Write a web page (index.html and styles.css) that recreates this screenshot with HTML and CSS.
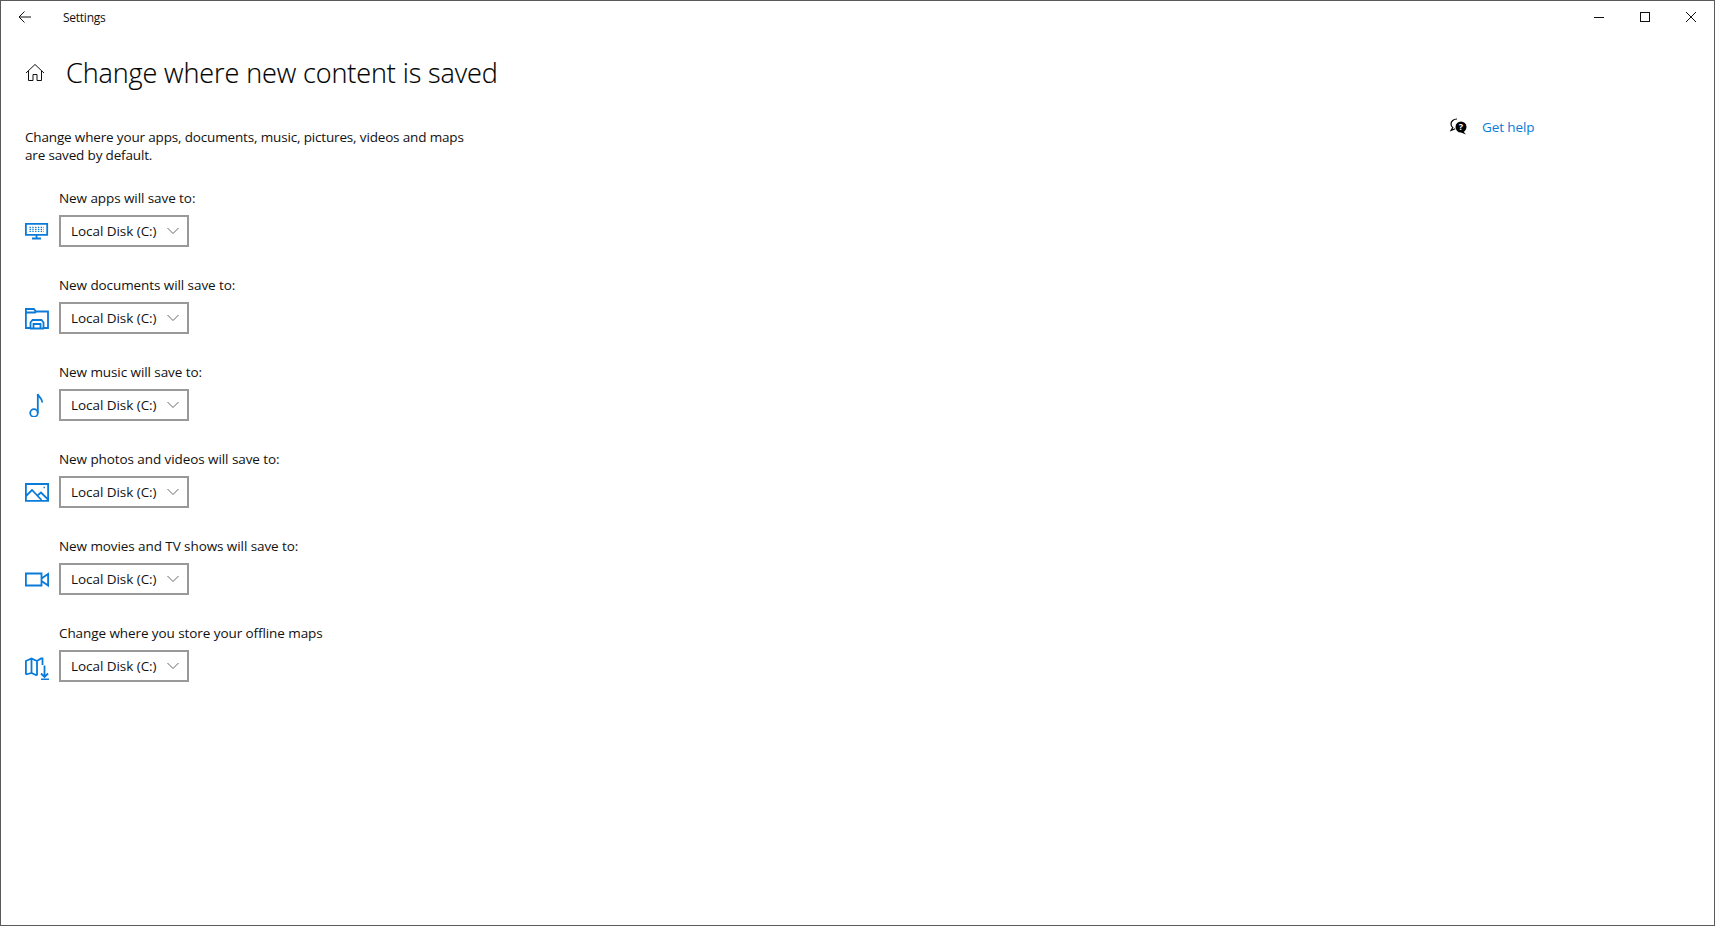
FILE: index.html
```html
<!DOCTYPE html>
<html lang="en">
<head>
<meta charset="utf-8">
<title>Settings</title>
<link rel="stylesheet" href="styles.css">
</head>
<body>
<div class="window">
  <header class="titlebar">
    <button class="back" aria-label="Back">
      <svg width="16" height="16" viewBox="0 0 16 16"><path d="M14 8H2.500M7.500 2.500 2 8l5.500 5.500" class="line"/></svg>
    </button>
    <span class="app-name">Settings</span>
    <div class="controls">
      <span class="ctl"><svg width="12" height="12" viewBox="0 0 12 12"><path d="M1 6.500h10" class="line"/></svg></span>
      <span class="ctl"><svg width="12" height="12" viewBox="0 0 12 12"><rect x="1.500" y="1.500" width="9" height="9" class="line"/></svg></span>
      <span class="ctl"><svg width="12" height="12" viewBox="0 0 12 12"><path d="M1 1l10 10M11 1 1 11" class="line"/></svg></span>
    </div>
  </header>
  <div class="content">
    <main class="main">
      <div class="heading">
        <svg class="home" width="20" height="20" viewBox="0 0 20 20"><path d="M1 10 10 1.500l9 8.500M3.500 8v9.500H8v-6h4v6h4.500V8" class="line"/></svg>
        <h1>Change where new content is saved</h1>
      </div>
      <p class="desc">Change where your apps, documents, music, pictures, videos and maps are saved by default.</p>

      <section class="row">
        <label>New apps will save to:</label>
        <svg class="icon" width="24" height="24" viewBox="0 0 24 24"><path d="M.9 4.800h21.300v11H.9zM11.500 16v3M7 19.500h9"/><path class="dots" d="M4.500 8.300h14.500M4.500 10.300h14.500M4.500 12.300h14.500"/></svg>
        <div class="combo"><span>Local Disk (C:)</span><svg width="12" height="8" viewBox="0 0 12 8"><path d="M.5 1 6 6.500 11.500 1" class="chev"/></svg></div>
      </section>

      <section class="row">
        <label>New documents will save to:</label>
        <svg class="icon" width="24" height="24" viewBox="0 0 24 24"><path d="M6 22H.9V3h8l2 2.500H23V22h-5M1 6.500h9l1.500-1"/><path d="M5.500 22.500v-6l2-2.500h9l2 2.500v6M8.500 22.500V18h7v4.500M5 22.500h14"/></svg>
        <div class="combo"><span>Local Disk (C:)</span><svg width="12" height="8" viewBox="0 0 12 8"><path d="M.5 1 6 6.500 11.500 1" class="chev"/></svg></div>
      </section>

      <section class="row">
        <label>New music will save to:</label>
        <svg class="icon" width="24" height="24" viewBox="0 0 24 24"><circle cx="9" cy="20" r="3.800"/><path d="M12.800 20V1c.5 3 4.500 4 4.500 8.500"/></svg>
        <div class="combo"><span>Local Disk (C:)</span><svg width="12" height="8" viewBox="0 0 12 8"><path d="M.5 1 6 6.500 11.500 1" class="chev"/></svg></div>
      </section>

      <section class="row">
        <label>New photos and videos will save to:</label>
        <svg class="icon" width="24" height="24" viewBox="0 0 24 24"><path d="M.9 4h22.200v16.800H.9zM1 16l6-6 9.500 10M12.500 15.500l3.500-3 7 7"/><path class="dots" d="M18.500 7.500h1.500"/></svg>
        <div class="combo"><span>Local Disk (C:)</span><svg width="12" height="8" viewBox="0 0 12 8"><path d="M.5 1 6 6.500 11.500 1" class="chev"/></svg></div>
      </section>

      <section class="row">
        <label>New movies and TV shows will save to:</label>
        <svg class="icon" width="24" height="24" viewBox="0 0 24 24"><path d="M.9 6.500h15.600v12H.9zM16.500 11.500l6.600-4.500v11.500L16.500 14"/></svg>
        <div class="combo"><span>Local Disk (C:)</span><svg width="12" height="8" viewBox="0 0 12 8"><path d="M.5 1 6 6.500 11.500 1" class="chev"/></svg></div>
      </section>

      <section class="row">
        <label>Change where you store your offline maps</label>
        <svg class="icon map" width="24" height="24" viewBox="0 0 24 24"><path d="M.9 18.500V5l5.600-2.500L12 5l4-2.500h1.500V9M6.500 2.500v14.500M12 5v14.500M12 19.500 6.500 17 .9 18.500"/><path d="M19.500 9.500v11M16 17.500l3.500 3.500 3.500-3.500M16 23.300h8"/></svg>
        <div class="combo"><span>Local Disk (C:)</span><svg width="12" height="8" viewBox="0 0 12 8"><path d="M.5 1 6 6.500 11.500 1" class="chev"/></svg></div>
      </section>
    </main>
    <aside class="help">
      <svg class="help-icon" width="18" height="18" viewBox="0 0 18 18"><path d="M7 1C3.500 1 1 3.300 1 6c0 1.500.7 2.700 1.800 3.600L1 12.500l4.200-1.700" class="thin"/><circle cx="11" cy="9" r="5.500" class="solid"/><path d="m13 13 3 3.500-5-2z" class="solid"/><text x="11" y="12" class="q">?</text></svg>
      <a class="help-link">Get help</a>
    </aside>
  </div>
</div>
</body>
</html>
```

FILE: styles.css
```css
* { box-sizing: border-box; }
html, body { margin: 0; height: 100%; }
body {
  font-family: "Open Sans", "Noto Sans", "Liberation Sans", sans-serif;
  background: #fff;
  color: #111;
  overflow: hidden;
}
.window {
  height: 926px;
  border: 1px solid #5a5a5a;
  display: flex;
  flex-direction: column;
}
.line { fill: none; stroke: #111; stroke-width: 1; }
.titlebar {
  height: 31px;
  display: flex;
  align-items: center;
  flex: none;
}
.back {
  width: 48px;
  height: 31px;
  padding: 0 0 0 16px;
  border: 0;
  background: none;
  display: flex;
  align-items: center;
}
.app-name {
  margin: 2px 0 0 14px;
  font-size: 12px;
  letter-spacing: -.25px;
}
.controls { margin-left: auto; display: flex; }
.ctl {
  width: 46px;
  height: 31px;
  display: flex;
  align-items: center;
  justify-content: center;
}
.content { flex: 1; display: flex; }
.main { flex: 1; padding: 0 0 0 24px; }
.heading {
  display: flex;
  align-items: center;
  height: 48px;
  margin-top: 17px;
}
.home { flex: none; }
h1 {
  margin: 0 0 0 21px;
  font-size: 27px;
  font-weight: 300;
  line-height: 48px;
  letter-spacing: -.1px;
  color: #000;
  -webkit-text-stroke: .15px #000;
}
.desc {
  margin: 31px 0 0;
  width: 450px;
  font-size: 13.500px;
  line-height: 18px;
  letter-spacing: -.16px;
}
.row {
  display: grid;
  grid-template-columns: 34px auto;
  grid-template-rows: 22px 32px;
  row-gap: 6px;
  justify-content: start;
  align-items: center;
  height: 60px;
  margin-bottom: 27px;
}
.desc + .row { margin-top: 23px; }
.row label {
  grid-column: 2;
  font-size: 13.500px;
  letter-spacing: -.08px;
  white-space: nowrap;
}
.icon {
  grid-column: 1;
  grid-row: 2;
  fill: none;
  stroke: #0a7bd8;
  stroke-width: 1.800;
}
.icon.map { margin-top: 4px; }
.dots { stroke-dasharray: 1.400 1.400; stroke-width: 1.300; }
.combo {
  grid-column: 2;
  grid-row: 2;
  width: 130px;
  height: 32px;
  border: 2px solid #999;
  display: flex;
  align-items: center;
  justify-content: space-between;
  padding: 0 8px 0 10px;
  font-size: 13.500px;
  letter-spacing: -.05px;
}
.chev { fill: none; stroke: #666; stroke-width: 1; }
.help {
  flex: none;
  width: 264px;
  height: 40px;
  margin-top: 75px;
  display: flex;
  align-items: center;
  gap: 14px;
}
.help-icon { flex: none; }
.thin { fill: none; stroke: #000; stroke-width: 1.200; }
.solid { fill: #000; }
.q { fill: #fff; font-size: 9px; font-weight: 700; text-anchor: middle; }
.help-link {
  color: #0a7bd8;
  font-size: 13.500px;
  letter-spacing: -.1px;
}
```
